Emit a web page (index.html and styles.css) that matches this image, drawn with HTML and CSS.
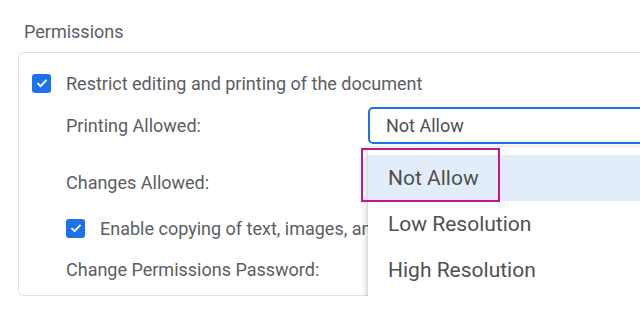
FILE: index.html
```html
<!DOCTYPE html>
<html lang="en">
<head>
    <meta charset="UTF-8">
    <meta name="viewport" content="width=device-width, initial-scale=1.0">
    <title>Permissions</title>
    <link rel="stylesheet" href="styles.css">
</head>
<body>
    <div class="section-title">Permissions</div>

    <div class="panel">
        <div class="row row-restrict">
            <span class="check">
                <svg width="12" height="10" viewBox="0 0 12 10"><path d="M1.5 5.2 L4.6 8.2 L10.5 1.8" fill="none" stroke="#fff" stroke-width="1.8"/></svg>
            </span>
            <span class="label">Restrict editing and printing of the document</span>
        </div>

        <div class="row row-printing sub">
            <span class="label field-label">Printing Allowed:</span>
            <div class="select-wrap">
                <div class="select">Not Allow</div>

                <!-- lista abierta del select -->
                <div class="dropdown">
                    <div class="option active">Not Allow</div>
                    <div class="option">Low Resolution</div>
                    <div class="option">High Resolution</div>
                    <div class="focus-ring"></div>
                </div>
            </div>
        </div>

        <div class="row row-changes sub">
            <span class="label field-label">Changes Allowed:</span>
        </div>

        <div class="row row-copy sub">
            <span class="check">
                <svg width="12" height="10" viewBox="0 0 12 10"><path d="M1.5 5.2 L4.6 8.2 L10.5 1.8" fill="none" stroke="#fff" stroke-width="1.8"/></svg>
            </span>
            <span class="label">Enable copying of text, images, and other content</span>
        </div>

        <div class="row row-password sub">
            <span class="label field-label">Change Permissions Password:</span>
        </div>
    </div>
</body>
</html>
```

FILE: styles.css
```css
body {
    font-family: Roboto, "Noto Sans", sans-serif;
    margin: 0;
    padding: 0;
    background-color: #fff;
    color: #5a5e63;
    overflow: hidden;
}
.section-title {
    font-size: 18px;
    line-height: 22px;
    padding: 21px 0 0 24px;
    height: 31px;
}
.panel {
    margin-left: 18px;
    width: 700px;
    border: 1px solid #e2e2e2;
    border-radius: 5px;
    padding: 19px 0 15px 13px;
    display: flex;
    flex-direction: column;
}
.row {
    display: flex;
    align-items: center;
    font-size: 18px;
    white-space: nowrap;
}
.sub {
    padding-left: 34px;
}
.row-restrict {
    height: 22px;
}
.row-printing {
    height: 37px;
    margin-top: 13px;
}
.row-changes {
    height: 37px;
    margin-top: 20px;
}
.row-copy {
    height: 22px;
    margin-top: 16px;
}
.row-password {
    height: 22px;
    margin-top: 19px;
}
.check {
    width: 19px;
    height: 19px;
    border-radius: 3px;
    background-color: #1a73e8;
    display: flex;
    align-items: center;
    justify-content: center;
    margin-right: 15px;
    flex-shrink: 0;
}
.field-label {
    width: 302px;
    flex-shrink: 0;
}
.select-wrap {
    position: relative;
}
.select {
    width: 320px;
    height: 33px;
    border: 2px solid #1a73e8;
    border-radius: 5px;
    padding-left: 16px;
    font-size: 18px;
    line-height: 34px;
    color: #4f4f4f;
    box-sizing: content-box;
}
/* lista desplegada, encima del resto */
.dropdown {
    position: absolute;
    left: 0;
    top: 40px;
    width: 340px;
    padding: 8px 0;
    background-color: #fff;
    border-radius: 4px;
    box-shadow: 0 3px 8px rgba(0, 0, 0, 0.25), 0 0 2px rgba(0, 0, 0, 0.12);
    z-index: 10;
}
.option {
    height: 46px;
    line-height: 46px;
    padding-left: 20px;
    font-size: 21px;
    color: #505050;
}
.option.active {
    background-color: #e3edf9;
}
.focus-ring {
    position: absolute;
    left: -7px;
    top: 1px;
    width: 135px;
    height: 50px;
    border: 2px solid #c2188f;
}
```
